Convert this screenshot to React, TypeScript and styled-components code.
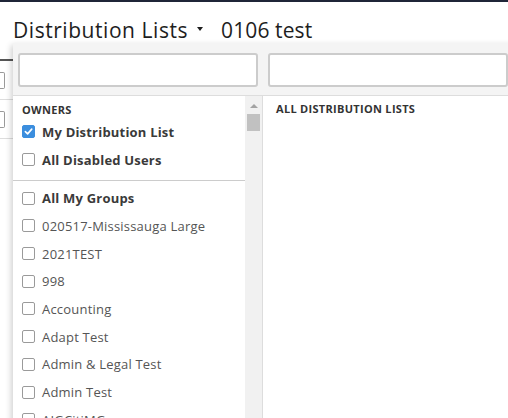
import React from 'react'
import styled, { createGlobalStyle } from 'styled-components'

const Global = createGlobalStyle`
  html, body {
    margin: 0;
    padding: 0;
    background: #fff;
    overflow: hidden;
    font-family: "Open Sans", "Liberation Sans", sans-serif;
  }
`

const Page = styled.div`
  position: relative;
  width: 508px;
  height: 418px;
  overflow: hidden;
`

const TopStrip = styled.div`
  height: 2px;
  background: #1f2538;
`

const Header = styled.div`
  display: flex;
  align-items: center;
  height: 56px;
  padding-left: 13px;
  gap: 18px;
  color: #1e1e1e;
  font-size: 21px;
  letter-spacing: 0.1px;
`

const Title = styled.div`
  display: flex;
  align-items: center;
  gap: 9px;
  letter-spacing: 0.55px;
`

const Caret = styled.span`
  width: 0;
  height: 0;
  border-left: 3.5px solid transparent;
  border-right: 3.5px solid transparent;
  border-top: 4px solid #1e1e1e;
  margin-top: -3px;
`

const Backdrop = styled.div`
  padding-top: 1px;
`

const BackHead = styled.div`
  height: 2px;
  width: 13px;
  background: #555;
`

const BackRow = styled.div`
  height: 38px;
  width: 13px;
  border-bottom: 1px solid #ddd;
  display: flex;
  align-items: center;
`

const BackBox = styled.span`
  width: 4px;
  height: 15px;
  border: 1px solid #999;
  border-left: none;
  border-radius: 0 2px 2px 0;
`

const Dropdown = styled.div`
  position: absolute;
  top: 43px;
  left: 13px;
  width: 520px;
  height: 400px;
  background: #fff;
  box-shadow: -2px 2px 6px rgba(0, 0, 0, 0.18);
  display: flex;
  flex-direction: column;
`

const SearchBar = styled.div`
  display: flex;
  gap: 10px;
  padding: 10px 5px 8px;
  background: #f4f4f4;
  border-bottom: 1px solid #ddd;
`

const SearchInput = styled.input`
  box-sizing: border-box;
  width: 240px;
  height: 34px;
  border: 2px solid #ccc;
  border-radius: 3px;
  background: #fff;
  outline: none;
`

const Body = styled.div`
  flex: 1;
  display: grid;
  grid-template-columns: 232px 17px 1px 1fr;
  min-height: 0;
`

const List = styled.div`
  padding-top: 6px;
  overflow: hidden;
`

const SectionLabel = styled.div<{ $indent?: number }>`
  font-size: 11px;
  font-weight: 700;
  color: #333;
  letter-spacing: 0.3px;
  padding-left: ${p => p.$indent ?? 9}px;
  height: 16px;
  line-height: 16px;
`

const Row = styled.div<{ $bold?: boolean }>`
  display: flex;
  align-items: center;
  height: 27.7px;
  padding-left: 9px;
  gap: 7px;
  font-size: 13px;
  letter-spacing: 0.2px;
  font-weight: ${p => (p.$bold ? 700 : 400)};
  color: ${p => (p.$bold ? '#3a3a3a' : '#555')};
  white-space: nowrap;
`

const Box = styled.span<{ $checked?: boolean }>`
  box-sizing: border-box;
  flex: none;
  width: 13px;
  height: 13px;
  border-radius: 2px;
  border: 1px solid ${p => (p.$checked ? '#3b8ede' : '#9a9a9a')};
  background: ${p => (p.$checked ? '#3b8ede' : '#fff')};
  display: flex;
  align-items: center;
  justify-content: center;
`

const Divider = styled.div`
  height: 1px;
  background: #ccc;
  margin: 7px 0 3px;
`

const Scrollbar = styled.div`
  background: #f1f1f1;
  display: flex;
  flex-direction: column;
  align-items: center;
  padding-top: 8px;
`

const ScrollArrow = styled.span`
  width: 0;
  height: 0;
  border-left: 4px solid transparent;
  border-right: 4px solid transparent;
  border-bottom: 4px solid #a3a3a3;
`

const Thumb = styled.div`
  width: 13px;
  height: 17px;
  margin-top: 6px;
  background: #c1c1c1;
`

const ColumnRule = styled.div`
  background: #ddd;
`

const RightCol = styled.div`
  padding-top: 5px;
`

const Check = () => (
  <svg width="9" height="9" viewBox="0 0 10 10">
    <path d="M1.5 5.2 L4 7.6 L8.6 2.4" fill="none" stroke="#fff" strokeWidth="1.8" strokeLinecap="round" strokeLinejoin="round" />
  </svg>
)

const owners = [
  { label: 'My Distribution List', checked: true },
  { label: 'All Disabled Users', checked: false },
]

const groups = [
  '020517-Mississauga Large',
  '2021TEST',
  '998',
  'Accounting',
  'Adapt Test',
  'Admin & Legal Test',
  'Admin Test',
  'AIGCitiMG',
]

const App = () => {
  return (
    <Page>
      <Global />
      <TopStrip />
      <Header>
        <Title>
          Distribution Lists <Caret />
        </Title>
        <span>0106 test</span>
      </Header>
      <Backdrop>
        <BackHead />
        <BackRow><BackBox /></BackRow>
        <BackRow><BackBox /></BackRow>
      </Backdrop>
      <Dropdown>
        <SearchBar>
          <SearchInput />
          <SearchInput />
        </SearchBar>
        <Body>
          <List>
            <SectionLabel>OWNERS</SectionLabel>
            {owners.map(o => (
              <Row key={o.label} $bold>
                <Box $checked={o.checked}>{o.checked && <Check />}</Box>
                {o.label}
              </Row>
            ))}
            <Divider />
            <Row $bold>
              <Box />
              All My Groups
            </Row>
            {groups.map(g => (
              <Row key={g}>
                <Box />
                {g}
              </Row>
            ))}
          </List>
          <Scrollbar>
            <ScrollArrow />
            <Thumb />
          </Scrollbar>
          <ColumnRule />
          <RightCol>
            <SectionLabel $indent={13}>ALL DISTRIBUTION LISTS</SectionLabel>
          </RightCol>
        </Body>
      </Dropdown>
    </Page>
  )
}

export default App
